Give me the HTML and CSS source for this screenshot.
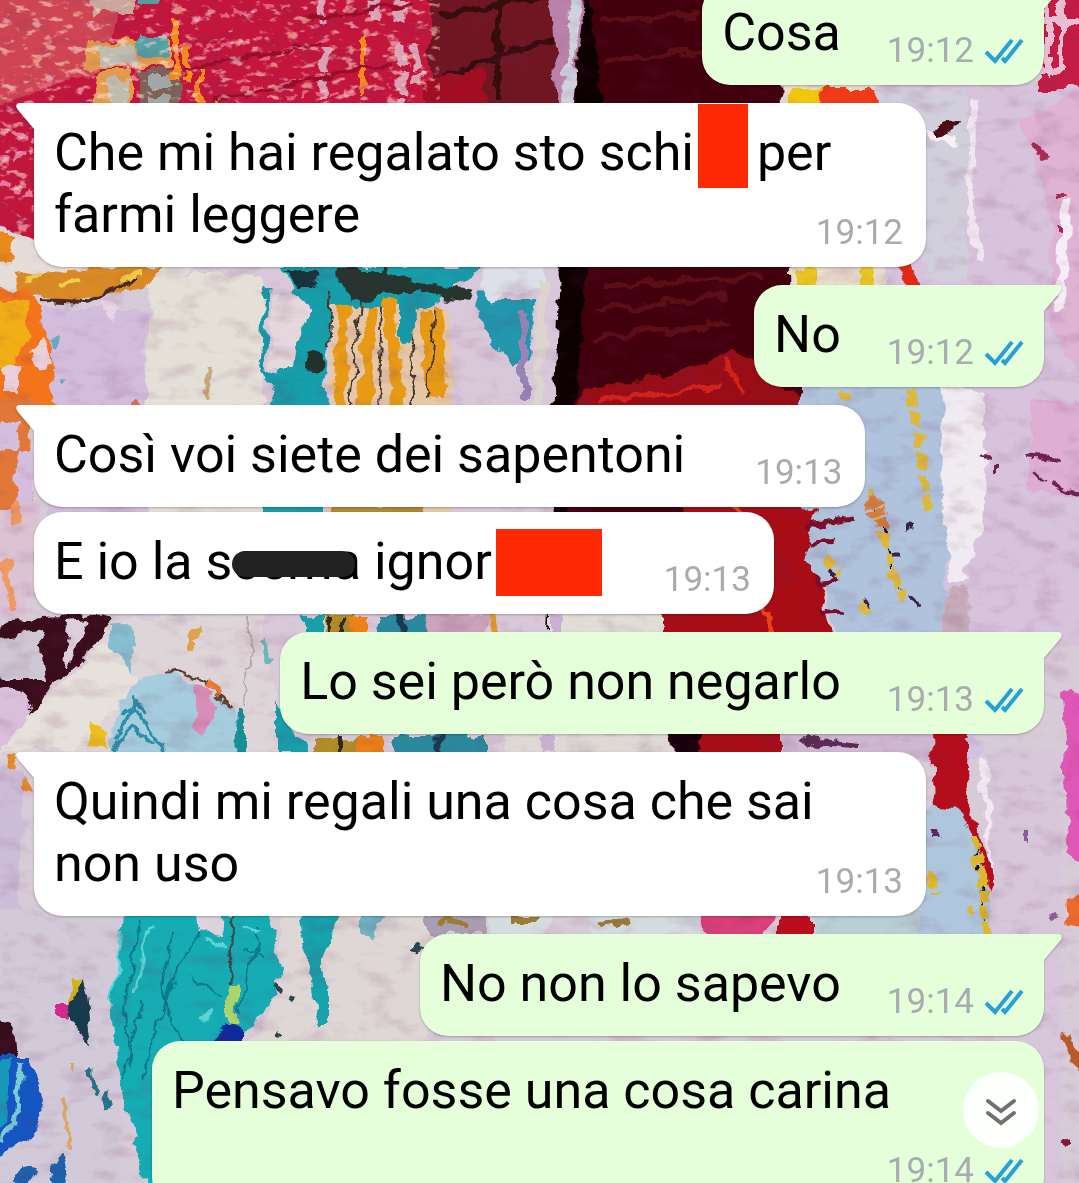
FILE: index.html
```html
<!DOCTYPE html>
<html lang="it">
<head>
    <meta charset="UTF-8">
    <meta name="viewport" content="width=device-width, initial-scale=1.0">
    <title>Chat</title>
    <link rel="stylesheet" href="styles.css">
</head>
<body>
    <!-- Wallpaper: abstract oil painting -->
    <svg class="wallpaper" viewBox="0 0 1079 1183" preserveAspectRatio="xMidYMid slice" aria-hidden="true">
        <defs>
            <filter id="rough" x="-5%" y="-5%" width="110%" height="110%">
                <feTurbulence type="fractalNoise" baseFrequency="0.05" numOctaves="4" seed="7" result="noise"/>
                <feDisplacementMap in="SourceGraphic" in2="noise" scale="16" xChannelSelector="R" yChannelSelector="G" result="moved"/>
                <feGaussianBlur in="moved" stdDeviation="0.6"/>
            </filter>
            <filter id="grain" x="0" y="0" width="100%" height="100%">
                <feTurbulence type="fractalNoise" baseFrequency="0.03 0.06" numOctaves="4" seed="3"/>
                <feColorMatrix values="0 0 0 0 0.15  0 0 0 0 0.02  0 0 0 0 0.1  3 0 0 0 -1.5"/>
            </filter>
            <filter id="flecks" x="0" y="0" width="100%" height="100%">
                <feTurbulence type="fractalNoise" baseFrequency="0.07 0.13" numOctaves="3" seed="12"/>
                <feColorMatrix values="0 0 0 0 0.98  0 0.9 0 0 0.1  0 0 0.9 0 0.15  0 7 0 0 -4"/>
            </filter>
        </defs>
        <rect width="1079" height="1183" fill="#d8cbd8"/>
        <g filter="url(#rough)">
            <!-- crimson weave -->
            <path d="M-20-20H430L450 120 240 250 150 252 60 256-20 214Z" fill="#c2143c"/>
            <path d="M-20-20H130L100 70-20 110Z" fill="#cf4452"/>
            <path d="M90 40h80v28H85zM100 70h30v40H90z" fill="#e39c4e"/>
            <path d="M100 44h36v22h-36zM108 80h18v26h-18z" fill="#bdbcae"/>
            <path d="M90-10h46v24H92z" fill="#c9a79c"/>
            <path d="M138-10h22v16h-22zM138 36h30v20h-30z" fill="#54a6a6"/>
            <path d="M140 70h40v40h-40z" fill="#7d6258"/>
            <path d="M148 76h26v12h-26zM148 96h22v14h-22z" fill="#a2a6a6"/>
            <path d="M176 20v60M200 70v36M363 38v60M216 98v14M186 50v30" stroke="#f28a1c" stroke-width="6"/>
            <path d="M324 0v24M324 50v60M400 0v22M402 44v64M416 46v34M376 0v20" stroke="#dba1b4" stroke-width="9" stroke-dasharray="22 5"/>
            <path d="M180 50l80-12M240 90l90-14M260 60l70-20M10 90l60-10M190 20l100-14M270 98l120-10" stroke="#e5607b" stroke-width="4" stroke-dasharray="9 6"/>
            <path d="M180 70l140-26M300 20l110-16M210 100l180-36" stroke="#98102c" stroke-width="4"/>
            <path d="M0 130l34 8M0 158l34-6M0 186l34 8" stroke="#e07a98" stroke-width="6" stroke-dasharray="10 5"/>
            <path d="M430-20H600V260H430Z" fill="#701423"/>
            <path d="M440 80l60-26 60-16M498 0v100M440 14l110-18" stroke="#35080f" stroke-width="6" fill="none"/>
            <path d="M425 80l60-10v40h-60z" fill="#a20e24"/>
            <path d="M550-10h34l-5 130h-20z" fill="#b982ab"/>
            <path d="M568-10h14l-6 70h-6zM563 66l8-8 9 10-2 50h-16z" fill="#cfd2df"/>
            <!-- dark centre -->
            <path d="M588-20H800V530H545L552 270Z" fill="#43060f"/>
            <path d="M588-20l16 130-30 300-16 220-36 10 30-340z" fill="#0b0405"/>
            <path d="M600 20l100-6M606 60l98-8M600 310l130-14M590 340l140-18M604 286l160-10" stroke="#5d0e18" stroke-width="5"/>
            <path d="M580 392l130-26 20-20 70 50v30H575z" fill="#980b12"/>
            <path d="M600 400l120-14M724 356l20 40" stroke="#d3241c" stroke-width="5"/>
            <!-- upper right -->
            <path d="M780 80h100l30 190 10 30H788z" fill="#e8dccb"/>
            <path d="M790 88h32v20h-34z" fill="#f2c60e"/>
            <path d="M822 88h62v20h-66z" fill="#f03a12"/>
            <path d="M877 86h220v560H900z" fill="#d8c3dc"/>
            <path d="M878 90h90v190h-40z" fill="#d2cfdd"/>
            <path d="M1020 120q40 80 30 200l50 100V80z" fill="#dfb4d3"/>
            <path d="M976 100q-14 80 4 160" stroke="#f0e6f1" stroke-width="7" fill="none"/>
            <path d="M1066 200l-6 110" stroke="#f5eef6" stroke-width="9"/>
            <path d="M928 138q10-4 30 2" stroke="#f8f0f5" stroke-width="8" fill="none"/>
            <path d="M934 132q8-12 26-9-2 12-26 14z" fill="#4d0819"/>
            <path d="M1031 144l14 16M1062 190v6M1058 228v6" stroke="#a82957" stroke-width="6"/>
            <path d="M1040-10h50v100h-50z" fill="#c41f45"/>
            <path d="M1048-10v82M1062-10v82M1040 22h50M1040 72h24" stroke="#e9bdd3" stroke-width="6"/>
            <path d="M896 265l14-2 12 30h-12z" fill="#e02c16"/>
            <path d="M794 268h22v22h-22zM860 268h14v20h-14z" fill="#e9c421"/>
            <!-- orange ridge and left column -->
            <path d="M-20 216L60 256 250 256 160 280-20 300Z" fill="#e6ddd8"/>
            <path d="M-10 226l24 10-4 26-24 4z" fill="#e98a1e"/>
            <path d="M150 275h130v260H140z" fill="#e4e0d7"/>
            <path d="M14 276l60-8 90-2-20 22-80 14-30-10-14 14z" fill="#d98a26"/>
            <path d="M40 300l46 2 50-22" stroke="#492c28" stroke-width="4" fill="none"/>
            <path d="M26 280l16-8M60 286l20-6M120 280l20-6" stroke="#f2cd4c" stroke-width="5"/>
            <path d="M40 308h105v220H50z" fill="#d2bddd"/>
            <path d="M100 302l20 2-8 16z" fill="#e8d4e2"/>
            <path d="M-20 290l50-4 20 60 5 60-20 10-55 10z" fill="#f4741b"/>
            <path d="M-20 300l46 0 4 40-20 30-30 6z" fill="#f2ae14"/>
            <path d="M30 350l14-12 6 24-10 10zM6 370l12-4v24H6z" fill="#ead0da"/>
            <path d="M-10 400h44l-4 120h-40z" fill="#e27838"/>
            <path d="M0 420l22 0-6 30-18 0zM18 450l16 0-6 80-14 4z" fill="#d4bddd"/>
            <!-- cream, teal and amber strokes -->
            <path d="M208 366v34" stroke="#c9a974" stroke-width="5"/>
            <path d="M264 266H560L545 660H264z" fill="#d9c8d9"/>
            <path d="M280 266h200l-60 50-90 0-6 94h-56l10-40 30-60z" fill="#139eaa"/>
            <path d="M272 296l22-6 14 20-18 60-20 0z" fill="#e4d8dc"/>
            <path d="M266 290l-4 80 30 20" stroke="#1599a6" stroke-width="5" fill="none"/>
            <path d="M332 306h120v290H326z" fill="#e6c7a8"/>
            <path d="M345 306l-6 110M372 306l-10 110M390 300l8 116M426 310l6 90M440 306l-2 90" stroke="#e69a16" stroke-width="12"/>
            <path d="M360 300l-10 120M382 306l-4 110M410 320l4 100M332 290l-4 60M436 310l-10 90" stroke="#453827" stroke-width="2"/>
            <path d="M334 270h50l30 12 60 10-4 10-70-10-50 10z" fill="#27352e"/>
            <path d="M400 290h22l-14 50-8 4z" fill="#159aaa"/>
            <path d="M480 290l20 10 34 0-4 60-16 10-20-24-20-40z" fill="#2097ad"/>
            <path d="M524 310v90" stroke="#9785b8" stroke-width="8"/>
            <path d="M480 262h66v24l-60 14z" fill="#dde0e8"/>
            <path d="M538 280h10l-6 140h-10z" fill="#dbd5ce"/>
            <path d="M285 272h34l-4 16h-16z" fill="#17313b"/>
            <circle cx="316" cy="360" r="9" fill="#24302c"/>
            <circle cx="55" cy="342" r="5" fill="#6aa8c8"/>
            <circle cx="64" cy="380" r="3" fill="#6aa8c8"/>
            <circle cx="134" cy="404" r="5" fill="#d96b54"/>
            <!-- red wall and blue canvas -->
            <path d="M690 490H826l-14 60 26 110 90 90-110 24H700L648 620z" fill="#a80b12"/>
            <path d="M735 500l20 60 20 90" stroke="#e84218" stroke-width="5" fill="none"/>
            <path d="M800 386h150l-6 260H840l-18-64-16-20 10-50-16-10z" fill="#afc3dc"/>
            <path d="M806 526l44-8M810 545l24-6M816 582l22-4M820 612l22-2" stroke="#7b1029" stroke-width="5"/>
            <path d="M912 392l8 60 8 60M872 490l12 50 20 60M826 554l14 20M840 392l10 8" stroke="#dfb83a" stroke-width="8" stroke-dasharray="15 6"/>
            <path d="M872 496l10 30" stroke="#d8803a" stroke-width="12" stroke-dasharray="9 3"/>
            <path d="M866 600l4 8M912 598l4 12M906 528h8M892 552h10M830 568l6 6" stroke="#3b2145" stroke-width="5"/>
            <path d="M860 602l10 12" stroke="#dfc04a" stroke-width="8"/>
            <path d="M944 386l40 6 2 120-22 70-14 0-8-80z" fill="#efebf0"/>
            <path d="M946 590q30-20 22 60h-26z" fill="#c7adbb"/>
            <path d="M1030 400h70v100l-70-10z" fill="#deafd3"/>
            <path d="M1028 456l32 4M1034 474l10 8M1050 484l30 10M980 454l10 2M990 468l8 0" stroke="#6d2352" stroke-width="4"/>
            <!-- middle left -->
            <path d="M-20 505h60l-14 110h-46z" fill="#dcc3d4"/>
            <path d="M14 500l4 22M4 560l8 50M10 560l-4 20" stroke="#ef9a62" stroke-width="8"/>
            <path d="M-20 650l30-30 100-6 4 20-60 50-16 34H-20z" fill="#3a0c1e"/>
            <path d="M-10 640l50-10 6 50-46 0z" fill="#cfc7d2"/>
            <path d="M68 622l20-2-12 34-12 12z" fill="#dccfda"/>
            <path d="M-20 700q40-24 54 8l-10 50h-44z" fill="#d9bfda"/>
            <path d="M112 620l150-10 20 150H-20l70-40z" fill="#ded5d8"/>
            <path d="M112 622l20 8v40l-20-20z" fill="#86bfd0"/>
            <path d="M108 640l30 40-60 70H0l44-50z" fill="#e6e2db"/>
            <path d="M120 700l20-20 30-10 50 30 20 20v50H104z" fill="#a6cddd"/>
            <path d="M116 740l16-34 16 20 14 26M120 716l14-16 12 12M112 750l20-20 20 14" stroke="#2b90a9" stroke-width="4" fill="none"/>
            <path d="M194 688l12 0 12 22-16 28-8-10z" fill="#d98eb7"/>
            <path d="M164 670q34-4 66 42" stroke="#5e4035" stroke-width="3" fill="none"/>
            <path d="M204 682l14 10" stroke="#ef7a36" stroke-width="7"/>
            <path d="M188 638l14-6M192 640v8" stroke="#dfa446" stroke-width="6"/>
            <path d="M250 616l-4 90" stroke="#b4a9a9" stroke-width="2"/>
            <path d="M88 726l20 6-2 16-18-2z" fill="#edc01b"/>
            <path d="M238 710h6v48h-8z" fill="#178f96"/>
            <path d="M302 614h24l-6 24h-18zM276 700l34 54h-34z" fill="#14a0aa"/>
            <path d="M262 640l8 20" stroke="#6cb8b6" stroke-width="7"/>
            <path d="M326 612h30v26h-30zM316 738h60v20h-60z" fill="#b28c27"/>
            <path d="M350 616h18v22h-18zM358 738h28v20h-28z" fill="#ef8212"/>
            <path d="M330 616v20M344 616v20M340 736v20" stroke="#33291d" stroke-width="4"/>
            <path d="M380 616h50v20h-50zM396 736h90v20h-90z" fill="#2a899d"/>
            <path d="M400 612v24M440 736v20" stroke="#1b3950" stroke-width="5"/>
            <path d="M430 612l60 4-8 30h-60z" fill="#cba4bb"/>
            <path d="M488 612l8 24" stroke="#dd9a2b" stroke-width="7"/>
            <path d="M548 604h115v150H548z" fill="#dfddd6"/>
            <path d="M506 730h164v30H506z" fill="#dfd9d6"/>
            <path d="M550 612h12v30h-12zM540 736h14v20h-14z" fill="#c9b0d2"/>
            <path d="M668 728l30 0 6 34h-30z" fill="#1d0508"/>
            <path d="M264 506h60v10h-60z" fill="#1e9aa8"/>
            <path d="M330 506h90v10h-90z" fill="#b08a34"/>
            <path d="M8 754l20 40" stroke="#e58b2b" stroke-width="9"/>
            <!-- right side, lower -->
            <path d="M780 730h160v30H780z" fill="#ceb7d0"/>
            <path d="M800 738l20 4 40 4" stroke="#5c2a55" stroke-width="6" fill="none"/>
            <path d="M932 730h40l-4 70 26 80-4 10-30-70-26-6z" fill="#b60d1a"/>
            <path d="M968 738l14 4-6 18-8-4z" fill="#d1c2e0"/>
            <path d="M920 812q30-12 46 6l20 60 14 70H920z" fill="#afc7dc"/>
            <path d="M972 836l10 40 6 58M932 872v20M964 910h8" stroke="#ddb92b" stroke-width="9" stroke-dasharray="13 5"/>
            <path d="M938 828v8" stroke="#5c2562" stroke-width="7"/>
            <path d="M982 756l8 90 14 90" stroke="#f2e8f3" stroke-width="7" fill="none"/>
            <path d="M988 750h74v440h-60z" fill="#d8c7db"/>
            <path d="M1062 690l30 10v180l-24-30z" fill="#e058b6"/>
            <path d="M1066 900l20-6v34l-22-4z" fill="#ed6a2d"/>
            <path d="M1064 1034l8 16 14 24" stroke="#b85a2a" stroke-width="9"/>
            <path d="M1024 830v12M1058 914l-6 10" stroke="#875d93" stroke-width="4"/>
            <circle cx="1066" cy="1142" r="5" fill="#7b1a38"/>
            <!-- lower left -->
            <path d="M-20 905h150l-10 290H-20z" fill="#d2cad8"/>
            <path d="M-20 762l44 6-6 140h-38z" fill="#cdbdd8"/>
            <path d="M124 915H268l12 54-6 26-24 34-20 30-50 10-10 120H146l-30-130-4-60z" fill="#13acb4"/>
            <path d="M140 920l-16 90 8 60M172 930l-10 80-20 70M200 930l-40 80M166 960q-10 50 20 84M188 976l34 20M260 930l-20 80M244 950l20 4M142 1000l-18 80" stroke="#087887" stroke-width="2" fill="none"/>
            <path d="M122 930l-10 70M150 925l-16 70M244 926l16 10M200 1020l14-6M206 940l20 8" stroke="#5ad6d6" stroke-width="3"/>
            <path d="M194 910h30l-4 26-22-4z" fill="#dcd3df"/>
            <path d="M232 912l-2 70" stroke="#3a4c4d" stroke-width="3"/>
            <path d="M228 984h10v42h-10z" fill="#aed36a"/>
            <path d="M218 1028q14-12 26 4v20h-30z" fill="#102b9c"/>
            <path d="M280 915h150v130H250l30-60z" fill="#ded7d5"/>
            <path d="M298 910h42l-18 50v26l6 4v32h-12l-4-44z" fill="#17a3ad"/>
            <path d="M360 910h26l-12 30-14-6z" fill="#6fb5c5"/>
            <path d="M276 986l6 6M276 1036l6-6M414 946l8 4M290 994l4 2" stroke="#26454d" stroke-width="6"/>
            <path d="M68 978l14 2-2 22-12 0z" fill="#d3b31c"/>
            <path d="M60 1004l10 0-2 14-8-2z" fill="#d12a8a"/>
            <path d="M70 1000l14-20 8 66-24-30z" fill="#123a4c"/>
            <path d="M88 1070l6 24M104 1090l4 20" stroke="#287387" stroke-width="5"/>
            <path d="M64 1100l4 50M74 1062v8" stroke="#dca765" stroke-width="4"/>
            <path d="M-10 1018l22 4 4 36-26 4z" fill="#34101f"/>
            <path d="M-10 1058l40 0 14 40-10 36-44 30z" fill="#1556c2"/>
            <path d="M-10 1062h20l-4 60-16 20z" fill="#1399b8"/>
            <path d="M22 1064l-8 60-14 20" stroke="#79cbd6" stroke-width="5" fill="none"/>
            <path d="M10 1180l14-14 14 2-10 20zM48 1164l16-8 4 30-14 4z" fill="#1d62ac"/>
            <!-- thin strip between the last blocks -->
            <path d="M426 914h60v20h-60z" fill="#a99eb0"/>
            <path d="M490 908h60v30h-60zM590 908h110v30H590z" fill="#d5dce0"/>
            <path d="M508 920h30M440 920l30 6M600 926l30-6" stroke="#9c7b36" stroke-width="6" fill="none"/>
            <path d="M700 908h80l-16 30h-60z" fill="#dc3f7a"/>
            <path d="M780 908h30v30h-30z" fill="#bd101c"/>
            <path d="M812 908h108v30H812z" fill="#b9cfd5"/>
        </g>
        <rect width="440" height="236" filter="url(#flecks)" opacity="0.55"/>
        <rect width="1079" height="1183" filter="url(#grain)" opacity="0.14"/>
    </svg>

    <svg class="sprite" aria-hidden="true">
        <symbol id="ticks" viewBox="0 0 40 28">
            <path d="M2 15l9 9L28 3M18 21l3 3L38 3" fill="none" stroke="#27a0d5" stroke-width="4"/>
        </symbol>
    </svg>

    <main class="chat">
        <div class="message out tail">
            <span class="text">Cosa</span>
            <span class="meta"><time>19:12</time><svg class="ticks" role="img" aria-label="Letto"><use href="#ticks"/></svg></span>
        </div>

        <div class="message in tail turn">
            <span class="text">Che mi hai regalato sto schi<span class="censor short"></span> per farmi leggere</span>
            <span class="meta"><time>19:12</time></span>
        </div>

        <div class="message out tail turn">
            <span class="text">No</span>
            <span class="meta"><time>19:12</time><svg class="ticks" role="img" aria-label="Letto"><use href="#ticks"/></svg></span>
        </div>

        <div class="message in tail turn">
            <span class="text">Così voi siete dei sapentoni</span>
            <span class="meta"><time>19:13</time></span>
        </div>

        <div class="message in">
            <span class="text">E io la s<span class="scribble">cema</span> ignor<span class="censor long"></span></span>
            <span class="meta"><time>19:13</time></span>
        </div>

        <div class="message out tail turn">
            <span class="text">Lo sei però non negarlo</span>
            <span class="meta"><time>19:13</time><svg class="ticks" role="img" aria-label="Letto"><use href="#ticks"/></svg></span>
        </div>

        <div class="message in tail turn">
            <span class="text">Quindi mi regali una cosa che sai non uso</span>
            <span class="meta"><time>19:13</time></span>
        </div>

        <div class="message out tail turn">
            <span class="text">No non lo sapevo</span>
            <span class="meta"><time>19:14</time><svg class="ticks" role="img" aria-label="Letto"><use href="#ticks"/></svg></span>
        </div>

        <div class="message out">
            <span class="text">Pensavo fosse una cosa carina</span>
            <span class="meta"><time>19:14</time><svg class="ticks" role="img" aria-label="Letto"><use href="#ticks"/></svg></span>
        </div>
    </main>

    <button class="scroll-down" type="button" aria-label="Vai in fondo">
        <svg viewBox="0 0 32 28" width="32" height="28">
            <path d="M3 3l13 10L29 3M3 15l13 10 13-10" fill="none" stroke="#707070" stroke-width="4" stroke-linecap="round"/>
        </svg>
    </button>
</body>
</html>
```

FILE: styles.css
```css
body {
    margin: 0;
    height: 100vh;
    overflow: hidden;
    font-family: Roboto, sans-serif;
    color: #000;
}

.wallpaper {
    position: fixed;
    top: 0;
    left: 0;
    width: 100%;
    height: 100%;
    z-index: -1;
}

.sprite {
    display: none;
}

/* The list is scrolled a little, so the first bubble is cut at the top */
.chat {
    display: flex;
    flex-direction: column;
    gap: 5px;
    margin-top: -17px;
    padding: 0 35px 0 34px;
}

.message {
    position: relative;
    display: flow-root;
    box-sizing: border-box;
    max-width: calc(100% - 118px);
    padding: 19px 20px 13px;
    border-radius: 28px;
    font-size: 52px;
    line-height: 62px;
    filter: drop-shadow(0 1px 1px rgba(0, 0, 0, 0.25));
}

.turn {
    margin-top: 13px;
}

.in {
    align-self: flex-start;
    padding-right: 23px;
    background: #fff;
}

.out {
    align-self: flex-end;
    background: #e5ffdb;
}

.in.tail {
    border-top-left-radius: 0;
}

.out.tail {
    border-top-right-radius: 0;
}

/* Bubble tails */
.tail::before {
    content: "";
    position: absolute;
    top: 0;
    width: 19px;
    height: 26px;
    background: inherit;
}

.in.tail::before {
    left: -18px;
    clip-path: path("M19 0H4C0 0-1 3 2 7L18 26H19Z");
}

.out.tail::before {
    right: -18px;
    clip-path: path("M0 0H15C19 0 20 3 17 7L1 26H0Z");
}

.meta {
    float: right;
    display: flex;
    align-items: center;
    gap: 10px;
    margin: 28px 0 0 46px;
    font-size: 35px;
    line-height: 42px;
    color: #a9acaf;
}

.in .meta {
    margin-left: 70px;
}

.ticks {
    width: 40px;
    height: 28px;
}

/* Words hidden by hand */
.censor,
.scribble {
    position: relative;
    display: inline-block;
}

.censor::after,
.scribble::after {
    content: "";
    position: absolute;
}

.short {
    width: 50px;
}

.long {
    width: 102px;
}

.censor::after {
    background: #ff2a04;
}

.short::after {
    left: 4px;
    width: 50px;
    bottom: -18px;
    height: 84px;
}

.long::after {
    left: 4px;
    width: 106px;
    bottom: -17px;
    height: 67px;
}

.scribble::after {
    left: 0;
    right: 6px;
    top: 20px;
    height: 26px;
    border-radius: 13px;
    background: #212121;
}

.scroll-down {
    position: fixed;
    right: 40px;
    bottom: 35px;
    display: flex;
    align-items: center;
    justify-content: center;
    width: 76px;
    height: 76px;
    padding: 4px 0 0;
    border: none;
    border-radius: 50%;
    background: #fdfffc;
    cursor: pointer;
}
```
